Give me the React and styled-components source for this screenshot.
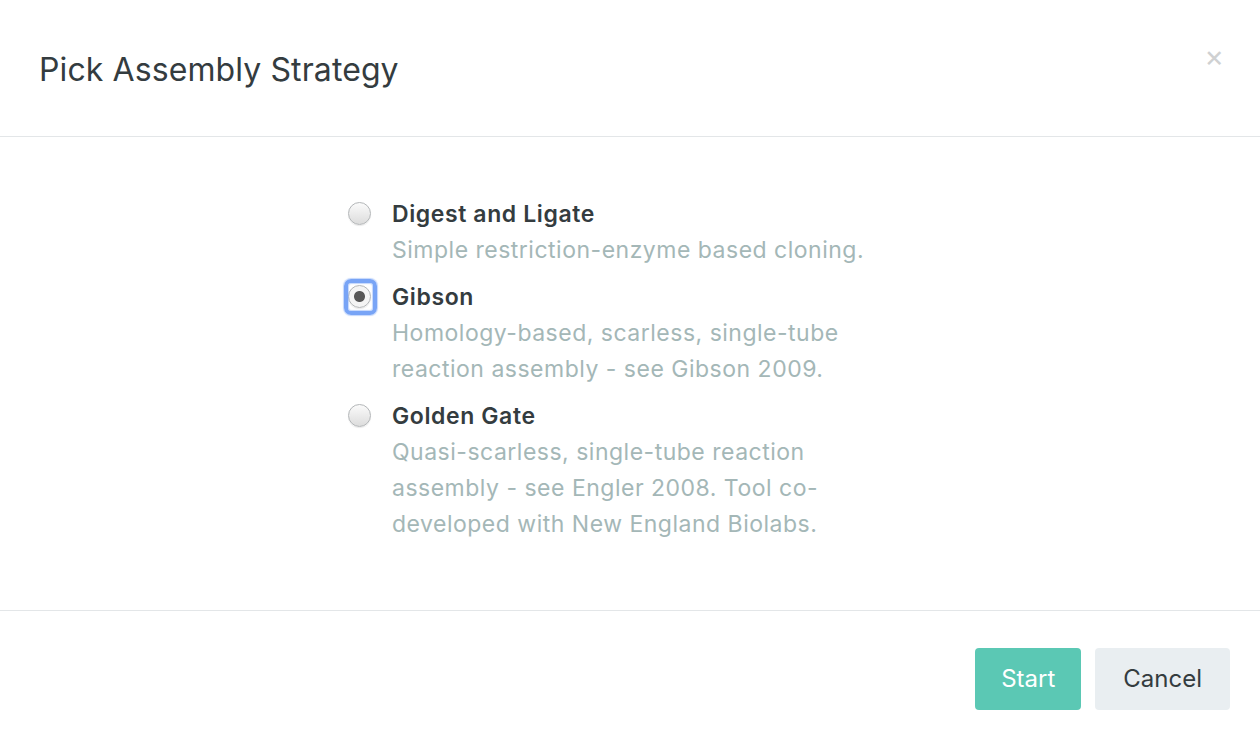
import React, { useState } from 'react'
import styled, { createGlobalStyle } from 'styled-components'

const Global = createGlobalStyle`
  html, body { margin:0; padding:0; background:#fff; }
  body { font-family: "Inter", "Noto Sans", sans-serif; color:#343c3f; }
`

const options = [
  { id: 'digest', title: 'Digest and Ligate', desc: 'Simple restriction-enzyme based cloning.' },
  { id: 'gibson', title: 'Gibson', desc: 'Homology-based, scarless, single-tube reaction assembly - see Gibson 2009.' },
  { id: 'golden', title: 'Golden Gate', desc: 'Quasi-scarless, single-tube reaction assembly - see Engler 2008. Tool co-developed with New England Biolabs.' },
]

const App = () => {
  const [picked, setPicked] = useState('gibson')

  return (
    <>
      <Global />
      <Modal>
        <Header>
          <Title>Pick Assembly Strategy</Title>
          <Close aria-label="close">×</Close>
        </Header>
        <Body>
          <List>
            {options.map((o) => (
              <Option key={o.id} onClick={() => setPicked(o.id)}>
                <Radio $checked={picked === o.id} />
                <Text>
                  <OptTitle>{o.title}</OptTitle>
                  <Desc>{o.desc}</Desc>
                </Text>
              </Option>
            ))}
          </List>
        </Body>
        <Footer>
          <Button $primary>Start</Button>
          <Button>Cancel</Button>
        </Footer>
      </Modal>
    </>
  )
}

const Modal = styled.div`
  width:1260px;
  height:740px;
  display:flex;
  flex-direction:column;
  background:#fff;
`
const Header = styled.div`
  height:137px;
  box-sizing:border-box;
  border-bottom:1px solid #e3e6e8;
  display:flex;
  align-items:center;
  justify-content:space-between;
  padding:0 36px 0 39px;
`
const Title = styled.h1`
  margin:0 0 -3px;
  font-size:32px;
  font-weight:400;
  letter-spacing:0.1px;
  color:#343c3f;
`
const Close = styled.button`
  border:none;
  background:none;
  font-size:30px;
  color:#cfd1d2;
  padding:0;
  margin-top:-24px;
  cursor:pointer;
  font-family:"Inter", sans-serif;
`
const Body = styled.div`
  height:474px;
  box-sizing:border-box;
  border-bottom:1px solid #e3e6e8;
  padding:59px 0 0 348px;
`
const List = styled.div`
  display:flex;
  flex-direction:column;
  gap:11px;
  width:540px;
`
const Option = styled.label`
  display:flex;
  gap:21px;
  cursor:pointer;
`
const Radio = styled.span`
  flex:none;
  width:23px;
  height:23px;
  margin-top:6px;
  border-radius:50%;
  box-sizing:border-box;
  border:1px solid #b3b6b8;
  background:${p => p.$checked
    ? 'radial-gradient(circle, #575757 0 5px, #f4f4f4 6px)'
    : 'linear-gradient(#fbfbfb, #dcdcdc)'};
  box-shadow:0 1px 1px rgba(0,0,0,0.08);
  position:relative;
  &::after {
    content:'';
    display:${p => p.$checked ? 'block' : 'none'};
    position:absolute;
    inset:-7px -7px -8px -5px;
    border:4px solid #78a4f6;
    border-radius:7px;
    box-shadow:0 0 1px 1px rgba(120,164,246,0.45), inset 0 0 1px 1px rgba(120,164,246,0.45);
  }
`
const Text = styled.div`
  display:flex;
  flex-direction:column;
`
const OptTitle = styled.div`
  font-size:23px;
  font-weight:600;
  line-height:36px;
  letter-spacing:0.6px;
  color:#343c3f;
`
const Desc = styled.div`
  font-size:23px;
  line-height:36px;
  letter-spacing:0.5px;
  color:#a4b7b7;
  max-width:490px;
`
const Footer = styled.div`
  flex:1;
  display:flex;
  justify-content:flex-end;
  align-items:center;
  gap:14px;
  padding:6px 30px 0 0;
`
const Button = styled.button`
  height:62px;
  padding:0 ${p => p.$primary ? '26px' : '28px'};
  border:none;
  border-radius:4px;
  font-family:inherit;
  font-size:24px;
  background:${p => p.$primary ? '#5bc8b4' : '#e9eef1'};
  color:${p => p.$primary ? '#fff' : '#343c3f'};
  cursor:pointer;
`

export default App
